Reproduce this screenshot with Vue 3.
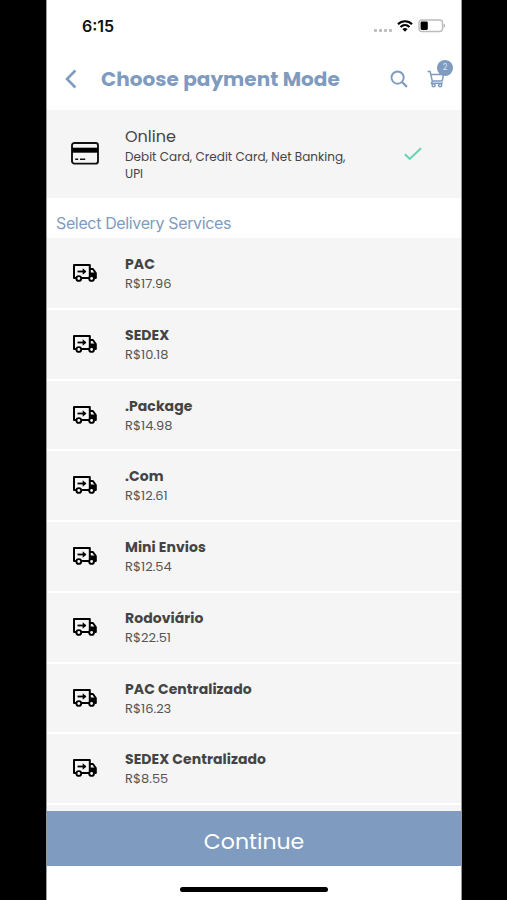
<template>
  <div class="stage">
    <main class="phone">
      <div class="status">
        <span class="time">6:15</span>
        <div class="indicators">
          <span class="signal"><i v-for="n in 4" :key="n"></i></span>
          <svg class="wifi" viewBox="0 0 16 12">
            <path d="M1 4.2C5 .3 11 .3 15 4.2M3.5 6.9c2.6-2.4 6.4-2.4 9 0" fill="none" stroke="#000" stroke-width="2.1" />
            <path d="M5.4 9Q8 7 10.6 9L8 11.7Z" fill="#000" />
          </svg>
          <svg class="battery" viewBox="0 0 28 14">
            <rect x="1" y="1" width="23.5" height="11.5" rx="2.7" fill="#fff" stroke="#bbb" stroke-width="1.4" />
            <rect x="2.6" y="2.6" width="7.2" height="8.3" rx="1.3" fill="#000" />
            <path d="M25.6 4.7v4.2q1.5-.7 1.5-2.1t-1.5-2.1Z" fill="#aaa" />
          </svg>
        </div>
      </div>

      <header class="header">
        <svg class="back" viewBox="0 0 12 20">
          <path d="M10.4 1.5 2 10l8.4 8.5" fill="none" stroke="currentColor" stroke-width="2.6" />
        </svg>
        <h1>Choose payment Mode</h1>
        <svg class="search" viewBox="0 0 18 18">
          <circle cx="7.6" cy="7.6" r="6.1" fill="none" stroke="currentColor" stroke-width="1.9" />
          <path d="m12 12 4.9 4.9" stroke="currentColor" stroke-width="2.2" />
        </svg>
        <div class="cart">
          <svg viewBox="0 0 18 18">
            <path d="M.5 1.5h2.6l2.2 9.6h9.9M3.8 4.6h12.7l-1.3 6.5M5.3 11.1l-.8 2.2h11.3" fill="none" stroke="currentColor" stroke-width="1.5" />
            <circle cx="6.6" cy="15.2" r="1.5" fill="none" stroke="currentColor" stroke-width="1.5" />
            <circle cx="13.2" cy="15.2" r="1.5" fill="none" stroke="currentColor" stroke-width="1.5" />
          </svg>
          <span class="badge">2</span>
        </div>
      </header>

      <section class="method">
        <svg class="card-icon" viewBox="0 0 28 23">
          <rect x="1" y="1" width="26" height="20.6" rx="2.4" fill="none" stroke="#111" stroke-width="1.9" />
          <path d="M1 8.2h26" stroke="#000" stroke-width="5" />
          <path d="M4.2 17.3h3M9 17.3h5.2" stroke="#111" stroke-width="1.6" />
        </svg>
        <div class="method-text">
          <h2>Online</h2>
          <p>Debit Card, Credit Card, Net Banking,<br>UPI</p>
        </div>
        <svg class="check" viewBox="0 0 18 14">
          <path d="m1 7.3 4.7 4.6L17 1.2" fill="none" stroke="#67d3b2" stroke-width="2.1" />
        </svg>
      </section>

      <h3 class="section-title">Select Delivery Services</h3>

      <ul class="services">
        <li v-for="s in services" :key="s.name" class="service">
          <svg class="truck" viewBox="0 0 24 18">
            <path d="M3.5 14H1V1.1h15.8V14H8.5M16.8 5h3.1l2.9 4v5h-1M16 14h.8" fill="none" stroke="#000" stroke-width="2" stroke-linejoin="round" />
            <path d="M17.2 8.5h5.6V14h-1.6a2.8 2.8 0 0 0-4-1.2Z" fill="#000" />
            <path d="M4.5 7.5h8" fill="none" stroke="#000" stroke-width="1.8" />
            <path d="M9.7 4.3 13.4 7.5l-3.7 3.2Z" fill="#000" />
            <circle cx="5.8" cy="14.5" r="2.4" fill="#f5f5f5" stroke="#000" stroke-width="1.9" />
            <circle cx="18.6" cy="14.5" r="2.4" fill="#f5f5f5" stroke="#000" stroke-width="1.9" />
          </svg>
          <div>
            <div class="name">{{ s.name }}</div>
            <div class="price">R${{ s.price }}</div>
          </div>
        </li>
        <li class="service"></li>
      </ul>

      <button class="continue" type="button">Continue</button>
      <footer class="home"><span></span></footer>
    </main>
  </div>
</template>

<script setup>
const services = [
  { name: 'PAC', price: '17.96' },
  { name: 'SEDEX', price: '10.18' },
  { name: '.Package', price: '14.98' },
  { name: '.Com', price: '12.61' },
  { name: 'Mini Envios', price: '12.54' },
  { name: 'Rodoviário', price: '22.51' },
  { name: 'PAC Centralizado', price: '16.23' },
  { name: 'SEDEX Centralizado', price: '8.55' },
]
</script>

<style>
body { background: #000; }
</style>

<style scoped>
* { box-sizing: border-box; }
h1, h2, h3, p, ul { margin: 0; padding: 0; }
svg { display: block; flex: none; }

.stage {
  height: 900px;
  padding: 0 45px 0 46px;
  background: #000;
  overflow: hidden;
}

.phone {
  display: flex;
  flex-direction: column;
  height: 900px;
  background: #fff;
  border: solid #999;
  border-width: 0 1px;
  font-family: Poppins, Inter, sans-serif;
  color: #444;
}

.status {
  display: flex;
  flex: none;
  justify-content: space-between;
  height: 52px;
  padding: 0 15px 0 35px;
  align-items: center;
}
.time {
  font: 600 16px/20px Inter, sans-serif;
  color: #111;
}
.indicators { display: flex; align-items: center; }
.signal { display: flex; gap: 2px; margin: 8px 5px 0 0; }
.signal i { width: 3px; height: 3px; border-radius: 1px; background: #bbb; }
.wifi { width: 16px; height: 12px; margin-right: 5px; }
.battery { width: 28px; height: 14px; }

.header {
  display: flex;
  flex: none;
  align-items: center;
  height: 58px;
  padding: 0 15px 4px 18px;
  color: #7f9bc0;
}
.back { width: 12px; height: 20px; }
h1 {
  width: 289px;
  padding-left: 24px;
  font-size: 20px;
  font-weight: 700;
  line-height: 30px;
  letter-spacing: 0.04px;
  white-space: nowrap;
}
.search { width: 18px; height: 18px; margin-left: 24px; }
.cart { position: relative; margin-left: 19px; }
.cart svg { width: 18px; height: 18px; }
.badge {
  position: absolute;
  left: 10px;
  top: -10px;
  width: 16px;
  height: 16px;
  border-radius: 50%;
  background: #7f9bc0;
  color: #dce6f2;
  font-size: 8px;
  line-height: 16px;
  text-align: center;
}

.method {
  display: flex;
  flex: none;
  height: 88px;
  padding: 16px 39px 0 24px;
  background: #f5f5f5;
}
.card-icon { width: 28px; height: 23px; margin-top: 16px; }
.method-text { flex: 1; padding-left: 26px; }
h2 {
  font-size: 16px;
  font-weight: 400;
  line-height: 22px;
}
p {
  font-size: 12px;
  line-height: 17px;
  letter-spacing: 0.03px;
  white-space: nowrap;
}
.check { width: 18px; height: 14px; margin-top: 21px; }

.section-title {
  flex: none;
  height: 40px;
  padding: 5px 0 0 9px;
  font: 400 16px/40px Inter, sans-serif;
  letter-spacing: -0.36px;
  color: #7f9bc0;
}

.services {
  flex: 1;
  min-height: 0;
  padding-top: 1px;
  background: #f5f5f5;
  overflow: hidden;
  list-style: none;
}
.service {
  display: flex;
  height: 70.75px;
  padding: 15px 0 0 26px;
  border-bottom: 2px solid #fff;
}
.truck { width: 24px; height: 18px; margin: 10px 28px 0 0; }
.name {
  font-size: 14px;
  font-weight: 700;
  line-height: 20px;
  letter-spacing: 0.06px;
}
.price {
  font-size: 13px;
  line-height: 19px;
  color: #555;
}

.continue {
  flex: none;
  height: 55px;
  padding: 5px 0 0;
  border: 0;
  background: #7f9bc0;
  color: #fff;
  font: 400 22px Poppins, Inter, sans-serif;
}
.home {
  display: flex;
  flex: none;
  height: 34px;
  padding-top: 21px;
  justify-content: center;
}
.home span { width: 148px; height: 5px; border-radius: 3px; background: #000; }
</style>
